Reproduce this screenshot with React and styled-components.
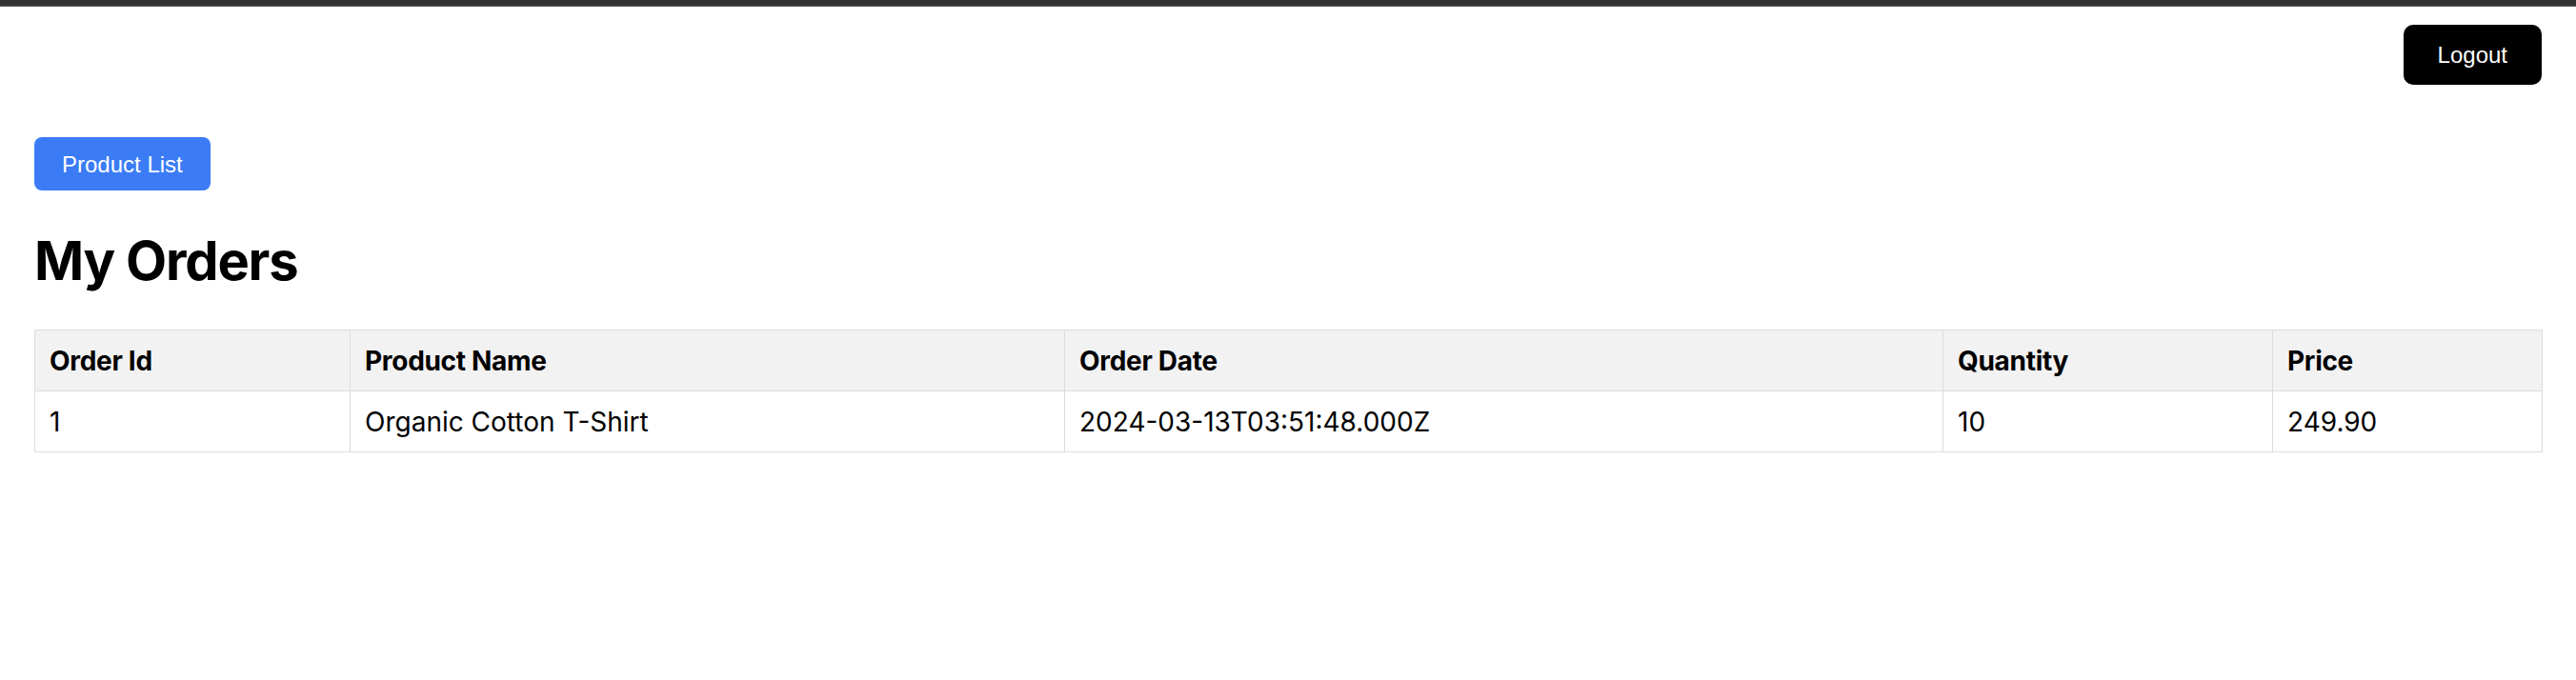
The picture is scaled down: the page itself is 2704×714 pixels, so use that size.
import React from "react";
import styled, { createGlobalStyle } from "styled-components";

const Global = createGlobalStyle`
  html, body { margin: 0; padding: 0; background: #fff; }
  body { font-family: Inter, "Noto Sans", sans-serif; color: #000; }
`;

const TopBar = styled.div`
  height: 6px;
  background: #333;
  border-bottom: 1px solid #5a5a5a;
`;

const Header = styled.header`
  display: flex;
  justify-content: flex-end;
  padding: 19px 36px 0 36px;
`;

const Button = styled.button`
  font-family: "Liberation Sans", Arial, sans-serif;
  font-size: 24px;
  line-height: 27px;
  color: #fff;
  border: none;
  cursor: pointer;
  background: ${(p) => (p.$variant === "primary" ? "#3b7cf6" : "#000")};
  border-radius: ${(p) => (p.$variant === "primary" ? "8px" : "10px")};
  height: ${(p) => (p.$variant === "primary" ? "56px" : "63px")};
  padding: ${(p) => (p.$variant === "primary" ? "0 29px" : "0 36px")};
`;

const Main = styled.main`
  padding: 55px 36px 0 36px;
`;

const NavRow = styled.div`
  display: flex;
  height: 59px;
  align-items: flex-start;
`;

const Title = styled.h1`
  font-family: Inter, sans-serif;
  font-size: 56px;
  font-weight: 700;
  line-height: 68px;
  letter-spacing: -1.2px;
  margin: 37px 0 38px 0;
`;

const Table = styled.table`
  width: 2632px;
  border-collapse: collapse;
  table-layout: fixed;
  font-family: Inter, sans-serif;
  font-size: 28px;
`;

const Th = styled.th`
  box-sizing: border-box;
  text-align: left;
  font-weight: 700;
  background: #f2f2f2;
  border: 1px solid #dddddd;
  padding: 16px 15px 14px 15px;
  line-height: 33px;
  letter-spacing: -0.3px;
  width: ${(p) => p.$w}px;
`;

const Td = styled.td`
  text-align: left;
  border: 1px solid #dddddd;
  padding: 16px 15px 14px 15px;
  line-height: 33px;
`;

const columns = [
  { label: "Order Id", w: 331 },
  { label: "Product Name", w: 750 },
  { label: "Order Date", w: 922 },
  { label: "Quantity", w: 346 },
  { label: "Price", w: 283 },
];

const orders = [
  ["1", "Organic Cotton T-Shirt", "2024-03-13T03:51:48.000Z", "10", "249.90"],
];

export default function App() {
  return (
    <>
      <Global />
      <TopBar />
      <Header>
        <Button>Logout</Button>
      </Header>
      <Main>
        <NavRow>
          <Button $variant="primary">Product List</Button>
        </NavRow>
        <Title>My Orders</Title>
        <Table>
          <thead>
            <tr>
              {columns.map((c) => (
                <Th key={c.label} $w={c.w}>
                  {c.label}
                </Th>
              ))}
            </tr>
          </thead>
          <tbody>
            {orders.map((row, i) => (
              <tr key={i}>
                {row.map((cell, j) => (
                  <Td key={j}>{cell}</Td>
                ))}
              </tr>
            ))}
          </tbody>
        </Table>
      </Main>
    </>
  );
}
